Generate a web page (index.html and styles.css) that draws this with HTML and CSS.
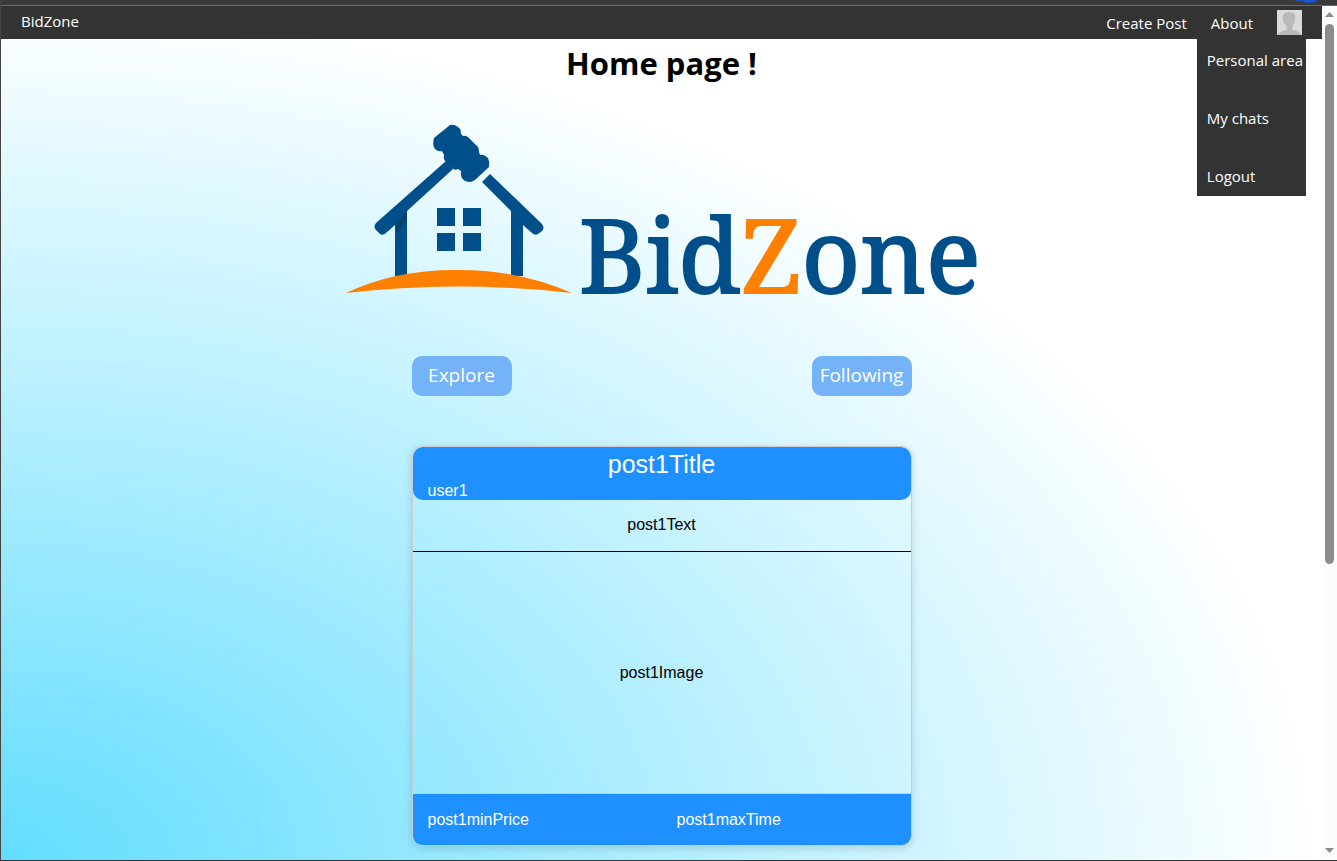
FILE: index.html
```html
<!DOCTYPE html>
<html lang="en">
<head>
<meta charset="utf-8">
<title>BidZone</title>
<link rel="stylesheet" href="styles.css">
</head>
<body>
<div class="window">
  <div class="window-top">
    <svg viewBox="0 0 24 4" aria-hidden="true"><path d="M0 0H24Q20 3 12 3Q8 0 0 1Z" fill="#1c56c8"/></svg>
  </div>
  <div class="viewport">
    <div class="page">
      <nav class="navbar">
        <a class="brand" href="#">BidZone</a>
        <div class="nav-links">
          <a href="#">Create Post</a>
          <a href="#">About</a>
          <button class="avatar" type="button" aria-label="Account menu">
            <svg viewBox="0 0 25 25" aria-hidden="true">
              <rect width="25" height="25" fill="#dadada"/>
              <path d="M1 25C2 22 6 21 9 20C10 19 10 17 9 15C7 14 6 12 6 10C5 5 7 2 12 2C17 2 19 5 18 10C18 12 17 14 16 15C15 17 15 19 16 20C19 21 23 22 24 25Z" fill="#b9b9b9"/>
            </svg>
          </button>
        </div>
        <div class="menu">
          <a href="#">Personal area</a>
          <a href="#">My chats</a>
          <a href="#">Logout</a>
        </div>
      </nav>
      <main class="content">
        <h1 class="title">Home page !</h1>
        <svg class="logo" viewBox="340 110 644 215" role="img" aria-label="BidZone">
          <g fill="#004f8a">
            <path d="M446 161L376 223Q373 227 376 230L380 234Q383 236 386 233L395 225V276H407V211L453 169Z"/>
            <path d="M490 174L542 224Q545 228 542 231L538 234Q535 236 532 233L523 225V276H511V211L482 182Z"/>
            <path d="M450 125Q454 124 458 127L460 129Q461 131 461 134L463 136Q466 135 469 138L478 147Q479 149 479 152L480 155Q484 154 488 158Q490 162 489 167L475 180Q472 182 469 182L465 181Q461 178 461 175V171L458 169Q455 171 452 168L445 161Q443 158 444 155L442 151Q438 152 435 149Q432 145 434 138Z"/>
            <path d="M437 208H455V226H437ZM463 208H481V226H463ZM437 233H455V251H437ZM463 233H481V251H463Z"/>
          </g>
          <path d="M396 223L407 213V219L396 233Z" fill="#06446f"/>
          <path d="M346 293Q396 269 460 270Q520 270 572 293Q456 280 346 293Z" fill="#ff8000"/>
          <text class="logo-text" x="579" y="293">Bid<tspan class="logo-accent">Z</tspan>one</text>
        </svg>
        <div class="tabs">
          <button type="button">Explore</button>
          <button type="button">Following</button>
        </div>
        <article class="post">
          <header class="post-head">
            <h2>post1Title</h2>
            <span>user1</span>
          </header>
          <p class="post-text">post1Text</p>
          <div class="post-image">post1Image</div>
          <footer class="post-foot">
            <span>post1minPrice</span>
            <span>post1maxTime</span>
          </footer>
        </article>
      </main>
    </div>
    <div class="scrollbar" aria-hidden="true">
      <svg viewBox="0 0 9 6"><path d="M0 5L4.500 0L9 5Z"/></svg>
      <div class="track"><div class="thumb"></div></div>
      <svg viewBox="0 0 9 6"><path d="M0 0H9L4.500 5Z"/></svg>
    </div>
  </div>
</div>
</body>
</html>
```
FILE: styles.css
```css
* {
  box-sizing: border-box;
}

body {
  margin: 0;
  font-family: "Open Sans", "Noto Sans", sans-serif;
  font-size: 15px;
  line-height: 22px;
}

.window {
  display: flex;
  flex-direction: column;
  height: 100vh;
  overflow: hidden;
  border-left: 1px solid #444;
  border-bottom: 1px solid #333;
}

.window-top {
  flex: none;
  display: flex;
  justify-content: flex-end;
  height: 6px;
  padding-right: 18px;
  background: #3a3a3a;
  border-bottom: 1px solid #6a6a6a;
}

.window-top svg {
  width: 24px;
  height: 4px;
}

.viewport {
  flex: 1;
  min-height: 0;
  display: flex;
}

.page {
  flex: 1;
  min-width: 0;
  overflow: hidden;
  background: radial-gradient(ellipse farthest-side at bottom left, #62ddff, #fff);
}

.navbar {
  position: relative;
  display: flex;
  justify-content: space-between;
  height: 33px;
  padding: 0 20px;
  background: #333;
}

.navbar a {
  color: #fff;
  text-decoration: none;
}

.brand {
  padding-top: 4px;
}

.nav-links {
  display: flex;
  align-items: center;
  gap: 24px;
}

.avatar {
  width: 25px;
  height: 25px;
  padding: 0;
  border: 0;
  background: none;
}

.avatar svg {
  display: block;
}

.menu {
  position: absolute;
  top: 100%;
  right: 16px;
  display: flex;
  flex-direction: column;
  gap: 36px;
  min-width: 109px;
  padding: 10px 3px 9px 10px;
  background: #333;
  white-space: nowrap;
}

.content {
  display: flex;
  flex-direction: column;
  align-items: center;
}

.title {
  margin: 2px 0 25px;
  font-size: 31px;
  line-height: 44px;
}

.logo {
  width: 100%;
  max-width: 644px;
}

.logo-text {
  font-family: "Noto Serif", "DejaVu Serif Condensed", "DejaVu Serif", serif;
  font-size: 102px;
  fill: #004f8a;
  stroke: #004f8a;
  stroke-width: 2px;
}

.logo-accent {
  fill: #ff8000;
  stroke: #ff8000;
}

.tabs {
  display: flex;
  justify-content: space-between;
  width: 100%;
  max-width: 500px;
  margin: 31px 0 50px;
}

.tabs button {
  width: 100px;
  height: 40px;
  padding: 0 0 2px;
  border: 0;
  border-radius: 10px;
  background: #74b3f8;
  color: #fff;
  font-family: inherit;
  font-size: 19px;
}

.post {
  width: 100%;
  max-width: 500px;
  border: 1px solid #ccc;
  border-radius: 10px;
  box-shadow: 0 2px 8px rgba(0, 0, 0, 0.15);
  overflow: hidden;
  font-family: "Liberation Sans", Arial, sans-serif;
  font-size: 16px;
  line-height: 18px;
}

.post-head {
  padding: 3px 15px 0;
  border-radius: 10px;
  background: #1e90ff;
  color: #fff;
}

.post-head h2 {
  margin: 0 0 4px;
  font-size: 25px;
  font-weight: normal;
  line-height: 28px;
  text-align: center;
}

.post-head span {
  display: block;
}

.post-text {
  margin: 0;
  padding: 16px 15px 17px;
  border-bottom: 1px solid #000;
  text-align: center;
}

.post-image {
  display: flex;
  align-items: center;
  justify-content: center;
  min-height: 242px;
  border-bottom: 1px solid #ccc;
}

.post-foot {
  display: grid;
  grid-template-columns: 1fr 1fr;
  padding: 17px 0 16px;
  background: #1e90ff;
  color: #fff;
}

.post-foot span {
  padding-left: 15px;
}

.scrollbar {
  flex: none;
  display: flex;
  flex-direction: column;
  align-items: center;
  gap: 6px;
  width: 15px;
  padding: 6px 0 6px;
  background: #fcfcfc;
}

.scrollbar svg {
  width: 9px;
  height: 6px;
  fill: #8b8b8b;
}

.track {
  flex: 1;
  width: 9px;
}

.thumb {
  height: 66%;
  border-radius: 5px;
  background: #8b8b8b;
}
```
